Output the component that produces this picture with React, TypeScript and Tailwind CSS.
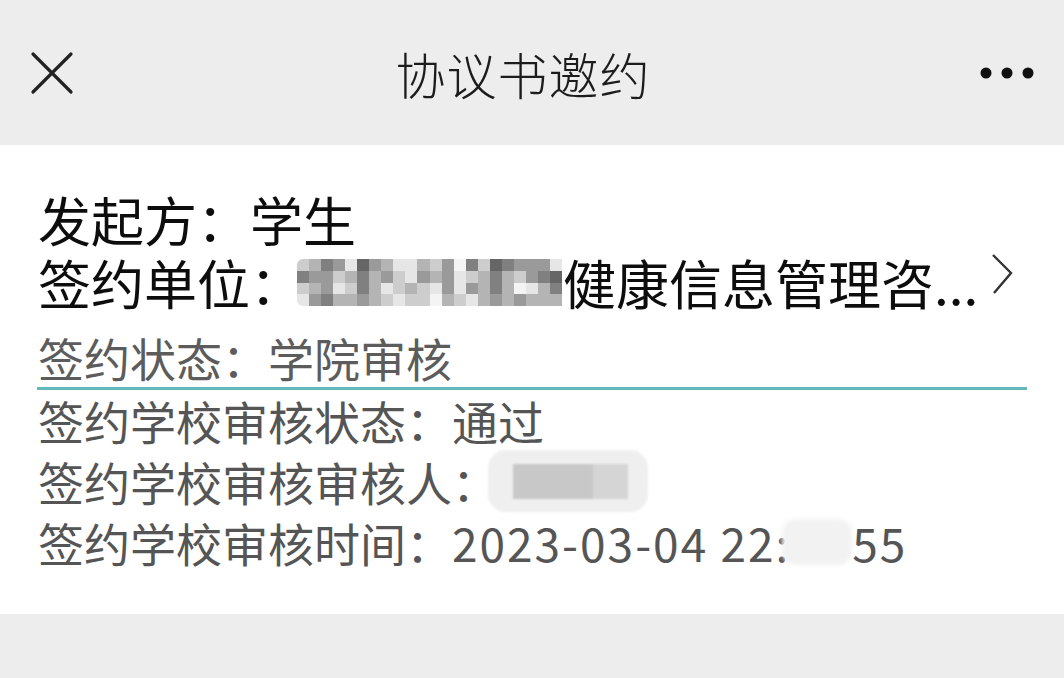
import React from 'react';

const CJK = "font-['Noto_Sans_CJK_SC','Noto_Sans',sans-serif]";

const shades = [
  'bg-[#666666]',
  'bg-[#808080]',
  'bg-[#9a9a9a]',
  'bg-[#b4b4b4]',
  'bg-[#cdcdcd]',
  'bg-[#e6e6e6]',
  'bg-[#f4f4f4]',
];

// pixelated name, one string per row
const mosaic = [
  '4312502355342614012225',
  '1224313245232543134210',
  '4325413543452523136531',
  '5213323454463453232333',
];

const Mosaic: React.FC = () => (
  <span className="inline-flex flex-col w-[265px] h-[47px] -ml-[6px] mr-[1px] rounded-l-md overflow-hidden blur-[0.6px]">
    {mosaic.map((row, r) => (
      <span key={r} className="flex flex-1">
        {row.split('').map((c, i) => (
          <span key={i} className={`flex-1 ${shades[Number(c)]}`} />
        ))}
      </span>
    ))}
  </span>
);

const App: React.FC = () => {
  return (
    <div className={`w-[1064px] h-[678px] bg-[#ededed] ${CJK} overflow-hidden`}>
      <header className="h-[145px] flex items-center px-[30px]">
        <svg width="44" height="44" viewBox="0 0 44 44" className="shrink-0">
          <path d="M3 3 L41 41 M41 3 L3 41" stroke="#222" strokeWidth="3.2" strokeLinecap="round" />
        </svg>
        <h1 className="flex-1 text-center text-[50px] font-light text-[#1c1c1c] leading-none pr-[6px] tracking-[1px]">
          协议书邀约
        </h1>
        <svg width="60" height="14" viewBox="0 0 60 14" className="shrink-0 mr-[-4px]">
          <circle cx="8" cy="7" r="5.5" fill="#111" />
          <circle cx="29" cy="7" r="5.5" fill="#111" />
          <circle cx="50" cy="7" r="5.5" fill="#111" />
        </svg>
      </header>

      <section className="bg-white pt-[43px] pb-[42px] px-[37px]">
        <div className="pl-[1px] text-[53px] leading-[63px] text-[#0d0d0d]">发起方：学生</div>
        <div className="relative flex items-center pl-[1px] text-[53px] leading-[63px] text-[#0d0d0d] whitespace-nowrap">
          <span>签约单位：</span>
          <Mosaic />
          <span>健康信息管理咨...</span>
          <svg width="26" height="44" viewBox="0 0 26 44" className="absolute right-[12px] top-[2px]">
            <path d="M4 2 L22 20 L5 40" fill="none" stroke="#333" strokeWidth="2.4" />
          </svg>
        </div>

        <div className="mt-[13px] border-b-[3px] border-[#63b9b9] pl-[1px] text-[46px] leading-[60px] text-[#5c5c5c]">
          签约状态：学院审核
        </div>
        <div className="pl-[1px] text-[46px] leading-[60px] text-[#555]">签约学校审核状态：通过</div>
        <div className="flex items-center pl-[1px] text-[46px] leading-[60px] text-[#555] whitespace-nowrap">
          <span>签约学校审核审核人：</span>
          <span className="relative inline-block w-[160px] h-[62px] -ml-[10px] rounded-[18px] bg-[#efefef] blur-[1px]">
            <span className="absolute left-[25px] top-[14px] w-[80px] h-[35px] bg-[#c8c8c8]" />
            <span className="absolute left-[105px] top-[14px] w-[35px] h-[35px] bg-[#d5d5d5]" />
          </span>
        </div>
        <div className="flex items-center pl-[1px] text-[46px] leading-[60px] text-[#555] whitespace-nowrap">
          <span>签约学校审核时间：</span>
          <span className="tracking-[2px]">2023-03-04 22:</span>
          <span className="inline-block w-[70px] h-[46px] -ml-[8px] rounded-[14px] bg-[#f2f2f2] blur-[2px]" />
          <span className="tracking-[2px]">55</span>
        </div>
      </section>
    </div>
  );
};

export default App;
